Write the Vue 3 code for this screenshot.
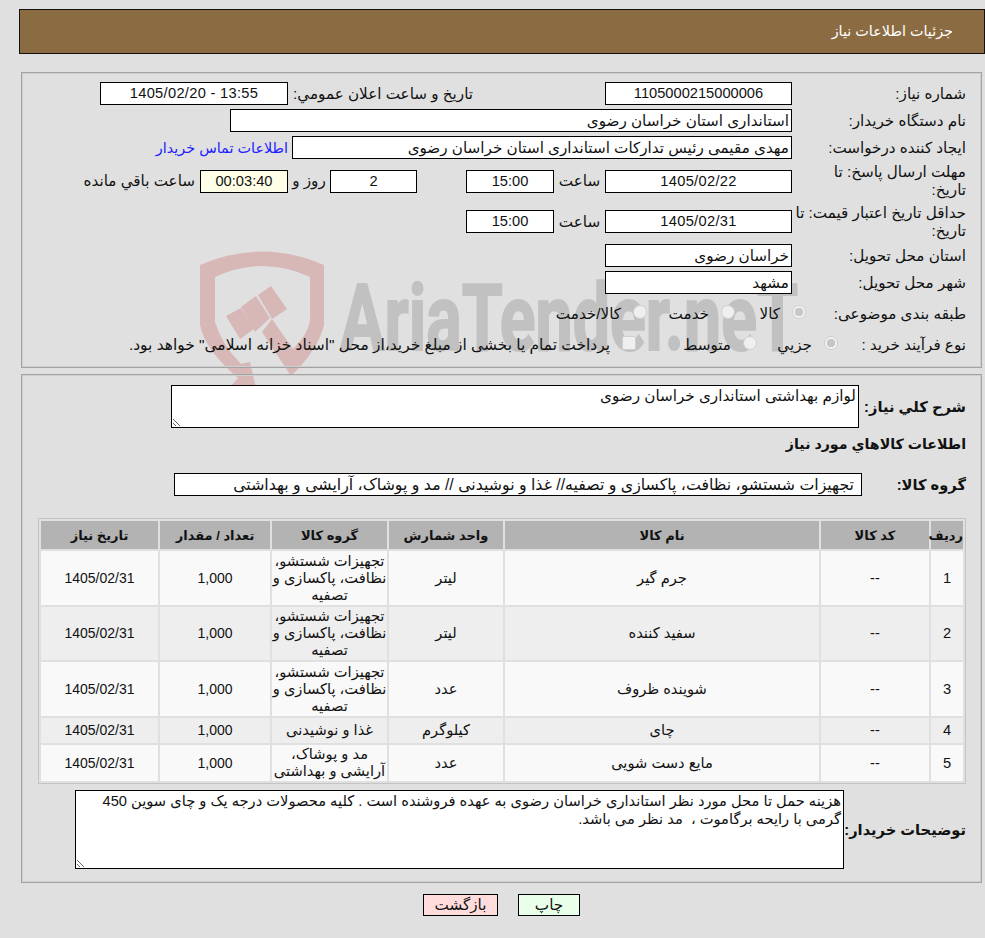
<template>
  <div class="page" dir="rtl">
    <!-- واترمارک پشت فرم -->
    <svg class="watermark" width="985" height="460" viewBox="0 0 985 460" aria-hidden="true">
      <g fill="#d8b7b7">
        <path d="M200 265 Q262 238 324 265 L324 325 Q318 350 291 376 L262 332 L272 319 L293 349 Q310 332 310 318 L310 277 Q262 255 215 277 L215 322 Q222 345 241 364 L250 362 L257 392 L231 386 L238 378 Q205 350 200 325 Z" />
        <path d="M226 316 L241 308 L254 329 L240 339 Z" />
        <path d="M241 307 L256 296 L270 318 L255 332 Z" />
        <path d="M258 295 L271 286 L287 309 L272 319 Z" />
      </g>
      <text class="watermark-text" x="340" y="350" textLength="458" lengthAdjust="spacingAndGlyphs">AriaTender.neT</text>
    </svg>

    <header class="title-bar">جزئیات اطلاعات نیاز</header>

    <section class="panel info-panel">
      <div class="row">
        <label class="label">شماره نیاز:</label>
        <div class="box box-main center num">1105000215000006</div>
        <span class="announce-label">تاریخ و ساعت اعلان عمومي:</span>
        <div class="box box-announce center num date">13:55 - 1405/02/20</div>
      </div>
      <div class="row">
        <label class="label">نام دستگاه خریدار:</label>
        <div class="box box-buyer">استانداری استان خراسان رضوی</div>
      </div>
      <div class="row">
        <label class="label">ایجاد کننده درخواست:</label>
        <div class="box box-creator">مهدی مقیمی رئیس تدارکات استانداری استان خراسان رضوی</div>
        <a class="contact-link" href="#">اطلاعات تماس خریدار</a>
      </div>
      <div class="row row-tall">
        <label class="label">مهلت ارسال پاسخ: تا<br>تاریخ:</label>
        <div class="box box-main center num date">1405/02/22</div>
        <span class="time-label">ساعت</span>
        <div class="box box-time center num">15:00</div>
        <div class="box box-days center num">2</div>
        <span class="days-label">روز و</span>
        <div class="box box-remain center num">00:03:40</div>
        <span class="remain-label">ساعت باقي مانده</span>
      </div>
      <div class="row row-tall row-tall-2">
        <label class="label">حداقل تاریخ اعتبار قیمت: تا<br>تاریخ:</label>
        <div class="box box-main center num date">1405/02/31</div>
        <span class="time-label">ساعت</span>
        <div class="box box-time center num">15:00</div>
      </div>
      <div class="row">
        <label class="label">استان محل تحویل:</label>
        <div class="box box-main">خراسان رضوی</div>
      </div>
      <div class="row">
        <label class="label">شهر محل تحویل:</label>
        <div class="box box-main">مشهد</div>
      </div>
      <div class="row row-radio">
        <label class="label label-category">طبقه بندی موضوعی:</label>
        <div v-for="item in categories" :key="item.text" class="option" :style="{ width: item.width + 'px' }">
          <span class="radio" :class="{ checked: item.checked }"></span>
          <span>{{ item.text }}</span>
        </div>
      </div>
      <div class="row row-process">
        <label class="label label-process">نوع فرآیند خرید :</label>
        <div class="option option-a">
          <span class="radio checked"></span>
          <span>جزيي</span>
        </div>
        <div class="option option-b">
          <span class="radio"></span>
          <span>متوسط</span>
        </div>
        <div class="option option-long">
          <span class="checkbox"></span>
          <span>پرداخت تمام یا بخشی از مبلغ خرید،از محل "اسناد خزانه اسلامی" خواهد بود.</span>
        </div>
      </div>
    </section>

    <section class="panel detail-panel">
      <div class="row summary-row">
        <label class="label-bold summary-label">شرح كلي نیاز:</label>
        <div class="area summary-area">لوازم بهداشتی استانداری خراسان رضوی</div>
      </div>
      <h3 class="goods-title">اطلاعات كالاهاي مورد نیاز</h3>
      <div class="row group-row">
        <label class="label-bold group-label">گروه کالا:</label>
        <div class="box group-box">تجهیزات شستشو، نظافت، پاکسازی و تصفیه// غذا و نوشیدنی // مد و پوشاک، آرایشی و بهداشتی</div>
      </div>

      <table class="goods-table">
        <colgroup>
          <col v-for="w in colWidths" :key="w.id" :style="{ width: w.size + 'px' }">
        </colgroup>
        <thead>
          <tr>
            <th v-for="h in headers" :key="h">{{ h }}</th>
          </tr>
        </thead>
        <tbody>
          <tr v-for="(item, i) in goods" :key="item.no" :class="{ odd: i % 2 === 1 }" :style="{ height: item.height + 'px' }">
            <td>{{ item.no }}</td>
            <td>--</td>
            <td>{{ item.name }}</td>
            <td>{{ item.unit }}</td>
            <td class="group-cell">{{ item.group }}</td>
            <td class="small-num">1,000</td>
            <td class="small-num">1405/02/31</td>
          </tr>
        </tbody>
      </table>

      <div class="row desc-row">
        <label class="label-bold desc-label">توضیحات خریدار:</label>
        <div class="area desc-area">هزینه حمل تا محل مورد نظر استانداری خراسان رضوی به عهده فروشنده است . کلیه محصولات درجه یک و چای سوین 450 گرمی با رایحه برگاموت ،&#160; مد نظر می باشد.</div>
      </div>
    </section>

    <div class="actions">
      <button class="btn btn-print" type="button">چاپ</button>
      <button class="btn btn-back" type="button">بازگشت</button>
    </div>
  </div>
</template>

<script setup>
const categories = [
  { text: 'کالا', width: 71, checked: true },
  { text: 'خدمت', width: 88, checked: false },
  { text: 'کالا/خدمت', width: 100, checked: false }
]

const headers = ['ردیف', 'کد کالا', 'نام کالا', 'واحد شمارش', 'گروه کالا', 'تعداد / مقدار', 'تاریخ نیاز']

const colWidths = [
  { id: 'no', size: 32 },
  { id: 'code', size: 108 },
  { id: 'name', size: 314 },
  { id: 'unit', size: 114 },
  { id: 'group', size: 115 },
  { id: 'qty', size: 110 },
  { id: 'date', size: 117 }
]

const cleaning = 'تجهیزات شستشو، نظافت، پاکسازی و تصفیه'

const goods = [
  { no: 1, name: 'جرم گیر', unit: 'لیتر', group: cleaning, height: 54 },
  { no: 2, name: 'سفید کننده', unit: 'لیتر', group: cleaning, height: 53 },
  { no: 3, name: 'شوینده ظروف', unit: 'عدد', group: cleaning, height: 54 },
  { no: 4, name: 'چای', unit: 'کیلوگرم', group: 'غذا و نوشیدنی', height: 25 },
  { no: 5, name: 'مایع دست شویی', unit: 'عدد', group: 'مد و پوشاک، آرایشی و بهداشتی', height: 36 }
]
</script>

<style>
html,
body {
  margin: 0;
  background: #e0e0e0;
}
</style>

<style scoped>
.page {
  position: relative;
  height: 938px;
  overflow: hidden;
  box-sizing: border-box;
  padding-top: 9px;
  background: #e0e0e0;
  color: #111;
  font-family: "Liberation Sans", "DejaVu Sans", sans-serif;
  font-size: 15.2px;
}

.num {
  font-size: 14.67px;
}

.date {
  letter-spacing: 0.3px;
}

.watermark {
  position: absolute;
  left: 0;
  top: 0;
  direction: ltr;
}

.watermark-text {
  fill: #c1c1c1;
  stroke: #c1c1c1;
  stroke-width: 2px;
  font-family: Roboto, sans-serif;
  font-weight: 700;
  font-size: 92px;
  direction: ltr;
  unicode-bidi: isolate;
}

.title-bar {
  position: relative;
  box-sizing: border-box;
  height: 45px;
  margin: 0 0 0 19px;
  padding-right: 31px;
  font-size: 14.4px;
  line-height: 43px;
  color: #fff;
  background: #8b6c42;
  border: 1px solid #111;
}

.panel {
  position: relative;
  box-sizing: border-box;
  width: 961px;
  margin-right: 3px;
  padding-right: 15px;
  border: 1px solid #a3a3a3;
  box-shadow: inset 0 0 0 1px #cfcfcf;
}

.info-panel {
  height: 296px;
  margin-top: 18px;
  padding-top: 9px;
}

.detail-panel {
  height: 509px;
  margin-top: 6px;
  padding-top: 10px;
}

.row {
  display: flex;
  align-items: center;
  height: 23px;
  margin-bottom: 4px;
}

.row-tall {
  height: 36px;
}

.row-tall-2 {
  height: 37px;
}

.row-radio {
  height: 30px;
  padding-top: 1px;
}

.label {
  flex: none;
  box-sizing: border-box;
  width: 174px;
  line-height: 18px;
  white-space: nowrap;
}

.label-category {
  width: 160px;
}

.label-process {
  width: 128px;
}

.label-bold {
  flex: none;
  font-size: 14.67px;
  font-weight: 700;
}

.box {
  flex: none;
  box-sizing: border-box;
  height: 23px;
  padding: 0 2px;
  line-height: 21px;
  white-space: nowrap;
  overflow: hidden;
  background: #fff;
  border: 1px solid #000;
}

.center {
  text-align: center;
}

.box-main {
  width: 187px;
}

.box-announce {
  width: 188px;
}

.box-buyer {
  width: 562px;
}

.box-creator {
  width: 500px;
}

.box-time {
  width: 88px;
}

.box-days {
  width: 87px;
  margin-right: 49px;
}

.box-remain {
  width: 88px;
  background: #ffffe8;
}

.announce-label {
  flex: none;
  width: 181px;
  margin-right: 132px;
  margin-left: 4px;
  white-space: nowrap;
}

.contact-link {
  margin-right: 4px;
  font-size: 14.4px;
  color: #2020ff;
  text-decoration: none;
  white-space: nowrap;
}

.time-label {
  flex: none;
  width: 51px;
  text-align: center;
}

.days-label {
  flex: none;
  width: 42px;
  text-align: center;
}

.remain-label {
  margin-right: 5px;
  white-space: nowrap;
}

.option {
  display: flex;
  flex: none;
  align-items: center;
  gap: 12px;
  box-sizing: border-box;
  white-space: nowrap;
}

.option-a {
  width: 81px;
}

.option-b {
  width: 121px;
}

.option-long {
  font-size: 15.45px;
  padding-top: 1px;
}

.radio,
.checkbox {
  flex: none;
  box-sizing: border-box;
  width: 14px;
  height: 14px;
  margin-top: -4px;
  background: #efefef;
  border: 1px solid #cfcfcf;
}

.radio {
  border-radius: 50%;
}

.radio.checked {
  background: radial-gradient(circle, #c6c6c6 0 4px, #f2f2f2 4.5px);
}

.checkbox {
  border-radius: 2px;
}

.summary-label {
  width: 107px;
}

.summary-row {
  height: 43px;
}

.area {
  box-sizing: border-box;
  padding: 1px 2px;
  overflow: auto;
  resize: both;
  line-height: 18px;
  background: #fff;
  border: 1px solid #000;
}

.summary-area {
  width: 688px;
  height: 43px;
}

.goods-title {
  margin: 0;
  height: 18px;
  padding-top: 3px;
  line-height: 18px;
  font-size: 14.2px;
  font-weight: 700;
}

.group-row {
  margin-top: 20px;
  margin-bottom: 22px;
}

.group-label {
  width: 104px;
}

.group-box {
  width: 688px;
  padding-right: 7px;
  font-size: 15.8px;
}

.goods-table {
  box-sizing: border-box;
  width: 928px;
  height: 266px;
  table-layout: fixed;
  border-collapse: separate;
  border-spacing: 2px;
  border: 1px solid #c4c4c4;
  font-size: 14.67px;
}

.goods-table th {
  height: 28px;
  padding: 0;
  background: #b3b3b3;
  font-size: 13px;
  font-weight: 700;
}

.goods-table td {
  padding: 0;
  text-align: center;
  line-height: 17px;
  background: #f9f9f9;
}

.goods-table td.small-num {
  font-size: 14px;
}

.goods-table tr.odd td {
  background: #eeeeee;
}

.desc-row {
  height: 79px;
  margin-top: 6px;
}

.desc-label {
  width: 122px;
}

.desc-area {
  width: 769px;
  height: 79px;
  font-size: 14.67px;
  white-space: pre-wrap;
}

.actions {
  position: relative;
  display: flex;
  gap: 20px;
  margin-top: 11px;
  padding-right: 405px;
}

.btn {
  box-sizing: border-box;
  height: 22px;
  padding: 0;
  font: inherit;
  color: #111;
  border: 1px solid #000;
}

.btn-print {
  width: 62px;
  background: #eaffea;
}

.btn-back {
  width: 75px;
  background: #ffdcdc;
}
</style>
